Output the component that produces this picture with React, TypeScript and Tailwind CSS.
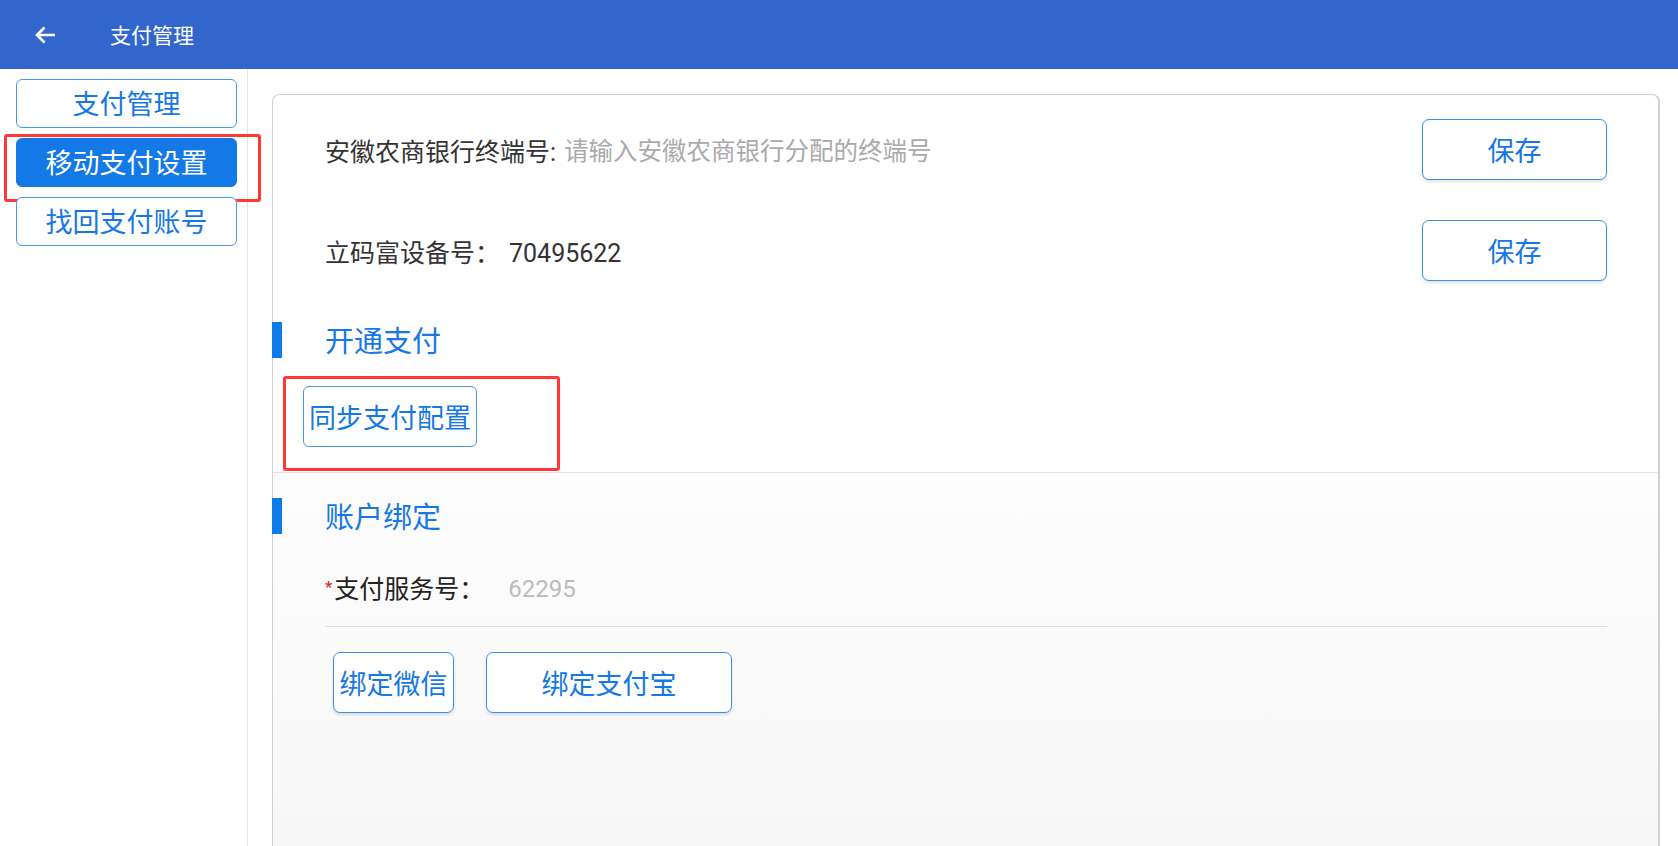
import React from "react"

const FONT = "font-['Roboto','Noto_Sans_CJK_SC',sans-serif]"

function BackArrow() {
  return (
    <svg width="22" height="20" viewBox="0 0 22 20" fill="none">
      <path d="M21 10H3.5M10.5 2.5L3 10l7.5 7.5" stroke="white" strokeWidth="2.6" strokeLinejoin="miter"/>
    </svg>
  )
}

const SideBtn = ({ label, active }:{ label:string, active?:boolean }) => (
  <button
    className={`w-[221px] h-[49px] pt-[4px] rounded-[6px] border text-[27px] leading-none flex items-center justify-center ${active ? "bg-[#1279e6] border-[#1279e6] text-white" : "bg-white border-[#4a97ee] text-[#1677e5]"}`}
  >
    {label}
  </button>
)

const OutlineBtn = ({ label, className }:{ label:string, className:string }) => (
  <button
    className={`h-[61px] pt-[5px] rounded-[7px] border border-[#3d8fee] bg-white text-[#1677e5] text-[27px] leading-none flex items-center justify-center shadow-[0_2px_3px_rgba(0,0,0,0.12)] ${className}`}
  >
    {label}
  </button>
)

const SectionTitle = ({ title }:{ title:string }) => (
  <div className="flex items-center h-[36px] -ml-px">
    <div className="w-[10px] h-full bg-[#0f7be8]"/>
    <span className="ml-[43px] mt-[4px] text-[29px] leading-none text-[#1677e5]">{title}</span>
  </div>
)

export default function App() {
  const menu = ["支付管理", "移动支付设置", "找回支付账号"]

  return (
    <div className={`w-full h-[846px] overflow-hidden flex flex-col bg-white ${FONT}`}>
      {/* top bar */}
      <div className="h-[69px] shrink-0 bg-[#3366cc] flex items-center pl-[34px]">
        <BackArrow/>
        <span className="ml-[54px] mt-[3px] text-white text-[21px] leading-none">支付管理</span>
      </div>

      <div className="flex flex-1 min-h-0">
        {/* left menu */}
        <div className="w-[248px] shrink-0 border-r border-[#e6e6e6] pt-[10px] pl-[16px] flex flex-col gap-[10px]">
          {menu.map((m, i) => (
            <div key={m} className="relative">
              <SideBtn label={m} active={i===1}/>
              {i===1 && (
                <div className="absolute -left-[12px] -top-[4px] w-[257px] h-[68px] border-[3px] border-[#ff3838] rounded-[3px] pointer-events-none"/>
              )}
            </div>
          ))}
        </div>

        {/* content */}
        <div className="flex-1 pl-[24px] pr-[18px] pt-[25px] flex flex-col">
          <div className="flex-1 border border-r-2 border-[#d0d0d0] border-b-0 rounded-t-[8px] flex flex-col">
            <div className="bg-white rounded-t-[8px]">
              <div className="mt-[24px] pl-[52px] pr-[51px] h-[61px] flex items-center justify-between">
                <div className="flex items-center leading-none mt-[5px]">
                  <span className="text-[25px] text-[#333]">安徽农商银行终端号:</span>
                  <span className="ml-[8px] text-[24.5px] text-[#aaa]">请输入安徽农商银行分配的终端号</span>
                </div>
                <OutlineBtn label="保存" className="w-[185px]"/>
              </div>

              <div className="mt-[40px] pl-[52px] pr-[51px] h-[61px] flex items-center justify-between">
                <div className="flex items-center leading-none mt-[5px] text-[25px] text-[#333]">
                  <span>立码富设备号：</span>
                  <span className="ml-[9px]">70495622</span>
                </div>
                <OutlineBtn label="保存" className="w-[185px]"/>
              </div>

              <div className="mt-[41px]">
                <SectionTitle title="开通支付"/>
              </div>

              <div className="mt-[28px] pl-[30px] pb-[25px] border-b border-[#e2e2e2]">
                <div className="relative w-fit">
                  <button className="h-[61px] px-[5px] pt-[5px] rounded-[6px] border border-[#4a97ee] bg-white text-[#1677e5] text-[27px] leading-none flex items-center">
                    同步支付配置
                  </button>
                  <div className="absolute -left-[20px] -top-[10px] w-[277px] h-[95px] border-[3px] border-[#ff3838] rounded-[3px] pointer-events-none"/>
                </div>
              </div>
            </div>

            <div className="flex-1 bg-gradient-to-b from-[#fdfdfd] to-[#f7f7f7]">
              <div className="mt-[25px]">
                <SectionTitle title="账户绑定"/>
              </div>

              <div className="mt-[29px] ml-[52px] mr-[51px] h-[48px] pt-[4px] flex items-center leading-none">
                <span className="text-[#e02020] text-[17px] -mt-[4px]">*</span>
                <span className="ml-[2px] text-[25px] text-[#222]">支付服务号：</span>
                <span className="ml-[24px] text-[24px] text-[#bbb]">62295</span>
              </div>
              <div className="mt-[15px] ml-[52px] mr-[51px] h-px bg-[#dedede]"/>

              <div className="mt-[25px] pl-[60px] flex gap-[32px]">
                <OutlineBtn label="绑定微信" className="w-[121px]"/>
                <OutlineBtn label="绑定支付宝" className="w-[246px]"/>
              </div>
            </div>
          </div>
        </div>
      </div>
    </div>
  )
}
